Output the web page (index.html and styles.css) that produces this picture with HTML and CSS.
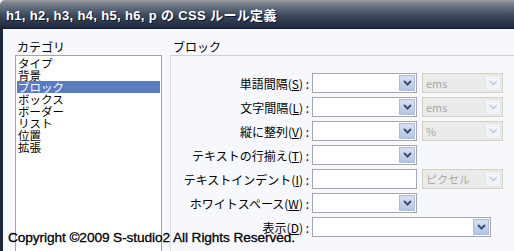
FILE: index.html
```html
<!DOCTYPE html>
<html lang="ja">
<head>
  <meta charset="UTF-8" />
  <title>CSS ルール定義</title>
  <link rel="stylesheet" href="styles.css">
</head>
<body>
  <div class="window">
    <div class="titlebar">h1, h2, h3, h4, h5, h6, p の CSS ルール定義</div>

    <div class="content">
      <!-- カテゴリ一覧 -->
      <div class="category">
        <div class="caption">カテゴリ</div>
        <ul class="list">
          <li>タイプ</li>
          <li>背景</li>
          <li class="selected">ブロック</li>
          <li>ボックス</li>
          <li>ボーダー</li>
          <li>リスト</li>
          <li>位置</li>
          <li>拡張</li>
        </ul>
      </div>

      <!-- ブロック設定 -->
      <div class="panel">
        <div class="caption">ブロック</div>
        <div class="group">
          <div class="row">
            <label>単語間隔(<u>S</u>) :</label>
            <div class="select w105"><span class="value"></span><span class="btn"><svg viewBox="0 0 9 6"><path d="M1 1l3.5 3.5L8 1"/></svg></span></div>
            <div class="select disabled w81"><span class="value">ems</span><span class="btn"><svg viewBox="0 0 9 6"><path d="M1 1l3.5 3.5L8 1"/></svg></span></div>
          </div>
          <div class="row">
            <label>文字間隔(<u>L</u>) :</label>
            <div class="select w105"><span class="value"></span><span class="btn"><svg viewBox="0 0 9 6"><path d="M1 1l3.5 3.5L8 1"/></svg></span></div>
            <div class="select disabled w81"><span class="value">ems</span><span class="btn"><svg viewBox="0 0 9 6"><path d="M1 1l3.5 3.5L8 1"/></svg></span></div>
          </div>
          <div class="row">
            <label>縦に整列(<u>V</u>) :</label>
            <div class="select w105"><span class="value"></span><span class="btn"><svg viewBox="0 0 9 6"><path d="M1 1l3.5 3.5L8 1"/></svg></span></div>
            <div class="select disabled w81"><span class="value">%</span><span class="btn"><svg viewBox="0 0 9 6"><path d="M1 1l3.5 3.5L8 1"/></svg></span></div>
          </div>
          <div class="row">
            <label>テキストの行揃え(<u>T</u>) :</label>
            <div class="select w105"><span class="value"></span><span class="btn"><svg viewBox="0 0 9 6"><path d="M1 1l3.5 3.5L8 1"/></svg></span></div>
          </div>
          <div class="row">
            <label>テキストインデント(<u>I</u>) :</label>
            <div class="textbox w105"></div>
            <div class="select disabled w81"><span class="value">ピクセル</span><span class="btn"><svg viewBox="0 0 9 6"><path d="M1 1l3.5 3.5L8 1"/></svg></span></div>
          </div>
          <div class="row">
            <label>ホワイトスペース(<u>W</u>) :</label>
            <div class="select w105"><span class="value"></span><span class="btn"><svg viewBox="0 0 9 6"><path d="M1 1l3.5 3.5L8 1"/></svg></span></div>
          </div>
          <div class="row">
            <label>表示(<u>D</u>) :</label>
            <div class="select w179"><span class="value"></span><span class="btn"><svg viewBox="0 0 9 6"><path d="M1 1l3.5 3.5L8 1"/></svg></span></div>
          </div>
        </div>
      </div>
    </div>

    <div class="copyright">Copyright ©2009 S-studio2 All Rights Reserved.</div>
  </div>
</body>
</html>
```

FILE: styles.css
```css
body { margin:0; background:#f7f8fc; font-family:"Noto Sans CJK JP", sans-serif; font-size:12px; color:#000; }
.window { position:relative; width:514px; height:251px; overflow:hidden; background:#f7f8fc; }

/* タイトルバー */
.titlebar { height:25px; padding:3px 0 0 6px; line-height:25px; color:#fff; font-family:"Liberation Sans","Noto Sans CJK JP",sans-serif; font-size:13px; font-weight:bold; letter-spacing:0.35px; text-shadow:1px 1px 0 #10182a; border-top-left-radius:5px; border-bottom:1px solid #141c2c;
  background:linear-gradient(to bottom, #9a9ea4 0, #7d848d 3px, #5f6a79 8px, #3a465a 16px, #222c40 27px); }

/* 本体 */
.content { display:grid; grid-template-columns:147px 1fr; column-gap:8px; height:222px; padding:9px 0 0 12px; border-left:3px solid #1e2738; box-sizing:border-box; }
.caption { height:17px; line-height:17px; padding-left:2px; }

/* カテゴリ */
.list { list-style:none; margin:0; padding:1px 1px 0; height:220px; background:#fff; border:1px solid #a5a5a5; }
.list li { height:12px; line-height:12px; padding-left:1px; font-size:11.5px; white-space:nowrap; }
.list li.selected { background:#5b7dbf; color:#fff; }

/* ブロック */
.panel .caption { padding-left:3px; }
.group { border-top:1px solid #cfd0d4; border-left:1px solid #dcdde2; height:200px; padding-top:17px; display:flex; flex-direction:column; gap:4px; }
.row { display:flex; align-items:center; height:20px; }
.row label { width:138px; margin-right:3px; text-align:right; white-space:nowrap; }

.select, .textbox { display:flex; align-items:center; height:20px; box-sizing:border-box; background:#fff; border:1px solid #a3a8b0; }
.select { margin-right:5px; }
.textbox { margin-right:5px; }
.w105 { width:105px; }
.w81 { width:81px; }
.w179 { width:179px; }
.select .value { flex:1; padding-left:3px; font-family:"Liberation Sans","Noto Sans CJK JP",sans-serif; font-size:12px; color:#a8a8a8; white-space:nowrap; overflow:hidden; }
.select .btn { display:flex; align-items:center; justify-content:center; width:16px; height:16px; margin-right:1px; box-sizing:border-box; border:1px solid #aebcd6; background:linear-gradient(#d7e1f2, #b4c5e4); }
.select .btn svg { width:9px; height:6px; fill:none; stroke:#3d4f78; stroke-width:2; }

.select.disabled { background:#ebebeb; border-color:#d3d2c4; }
.select.disabled .btn { border-color:#e3e7ee; background:#f0f3f8; }
.select.disabled .btn svg { stroke:#c3cad8; stroke-width:1.5; }
.select.disabled .value { color:#a9a9a9; font-family:"Noto Sans CJK JP",sans-serif; font-size:11px; }

/* 透かし */
.copyright { position:absolute; left:8px; top:230px; font-family:"Liberation Sans",sans-serif; font-size:13.7px; color:#000; letter-spacing:-0.1px; -webkit-text-stroke:0.3px #000; }
```
